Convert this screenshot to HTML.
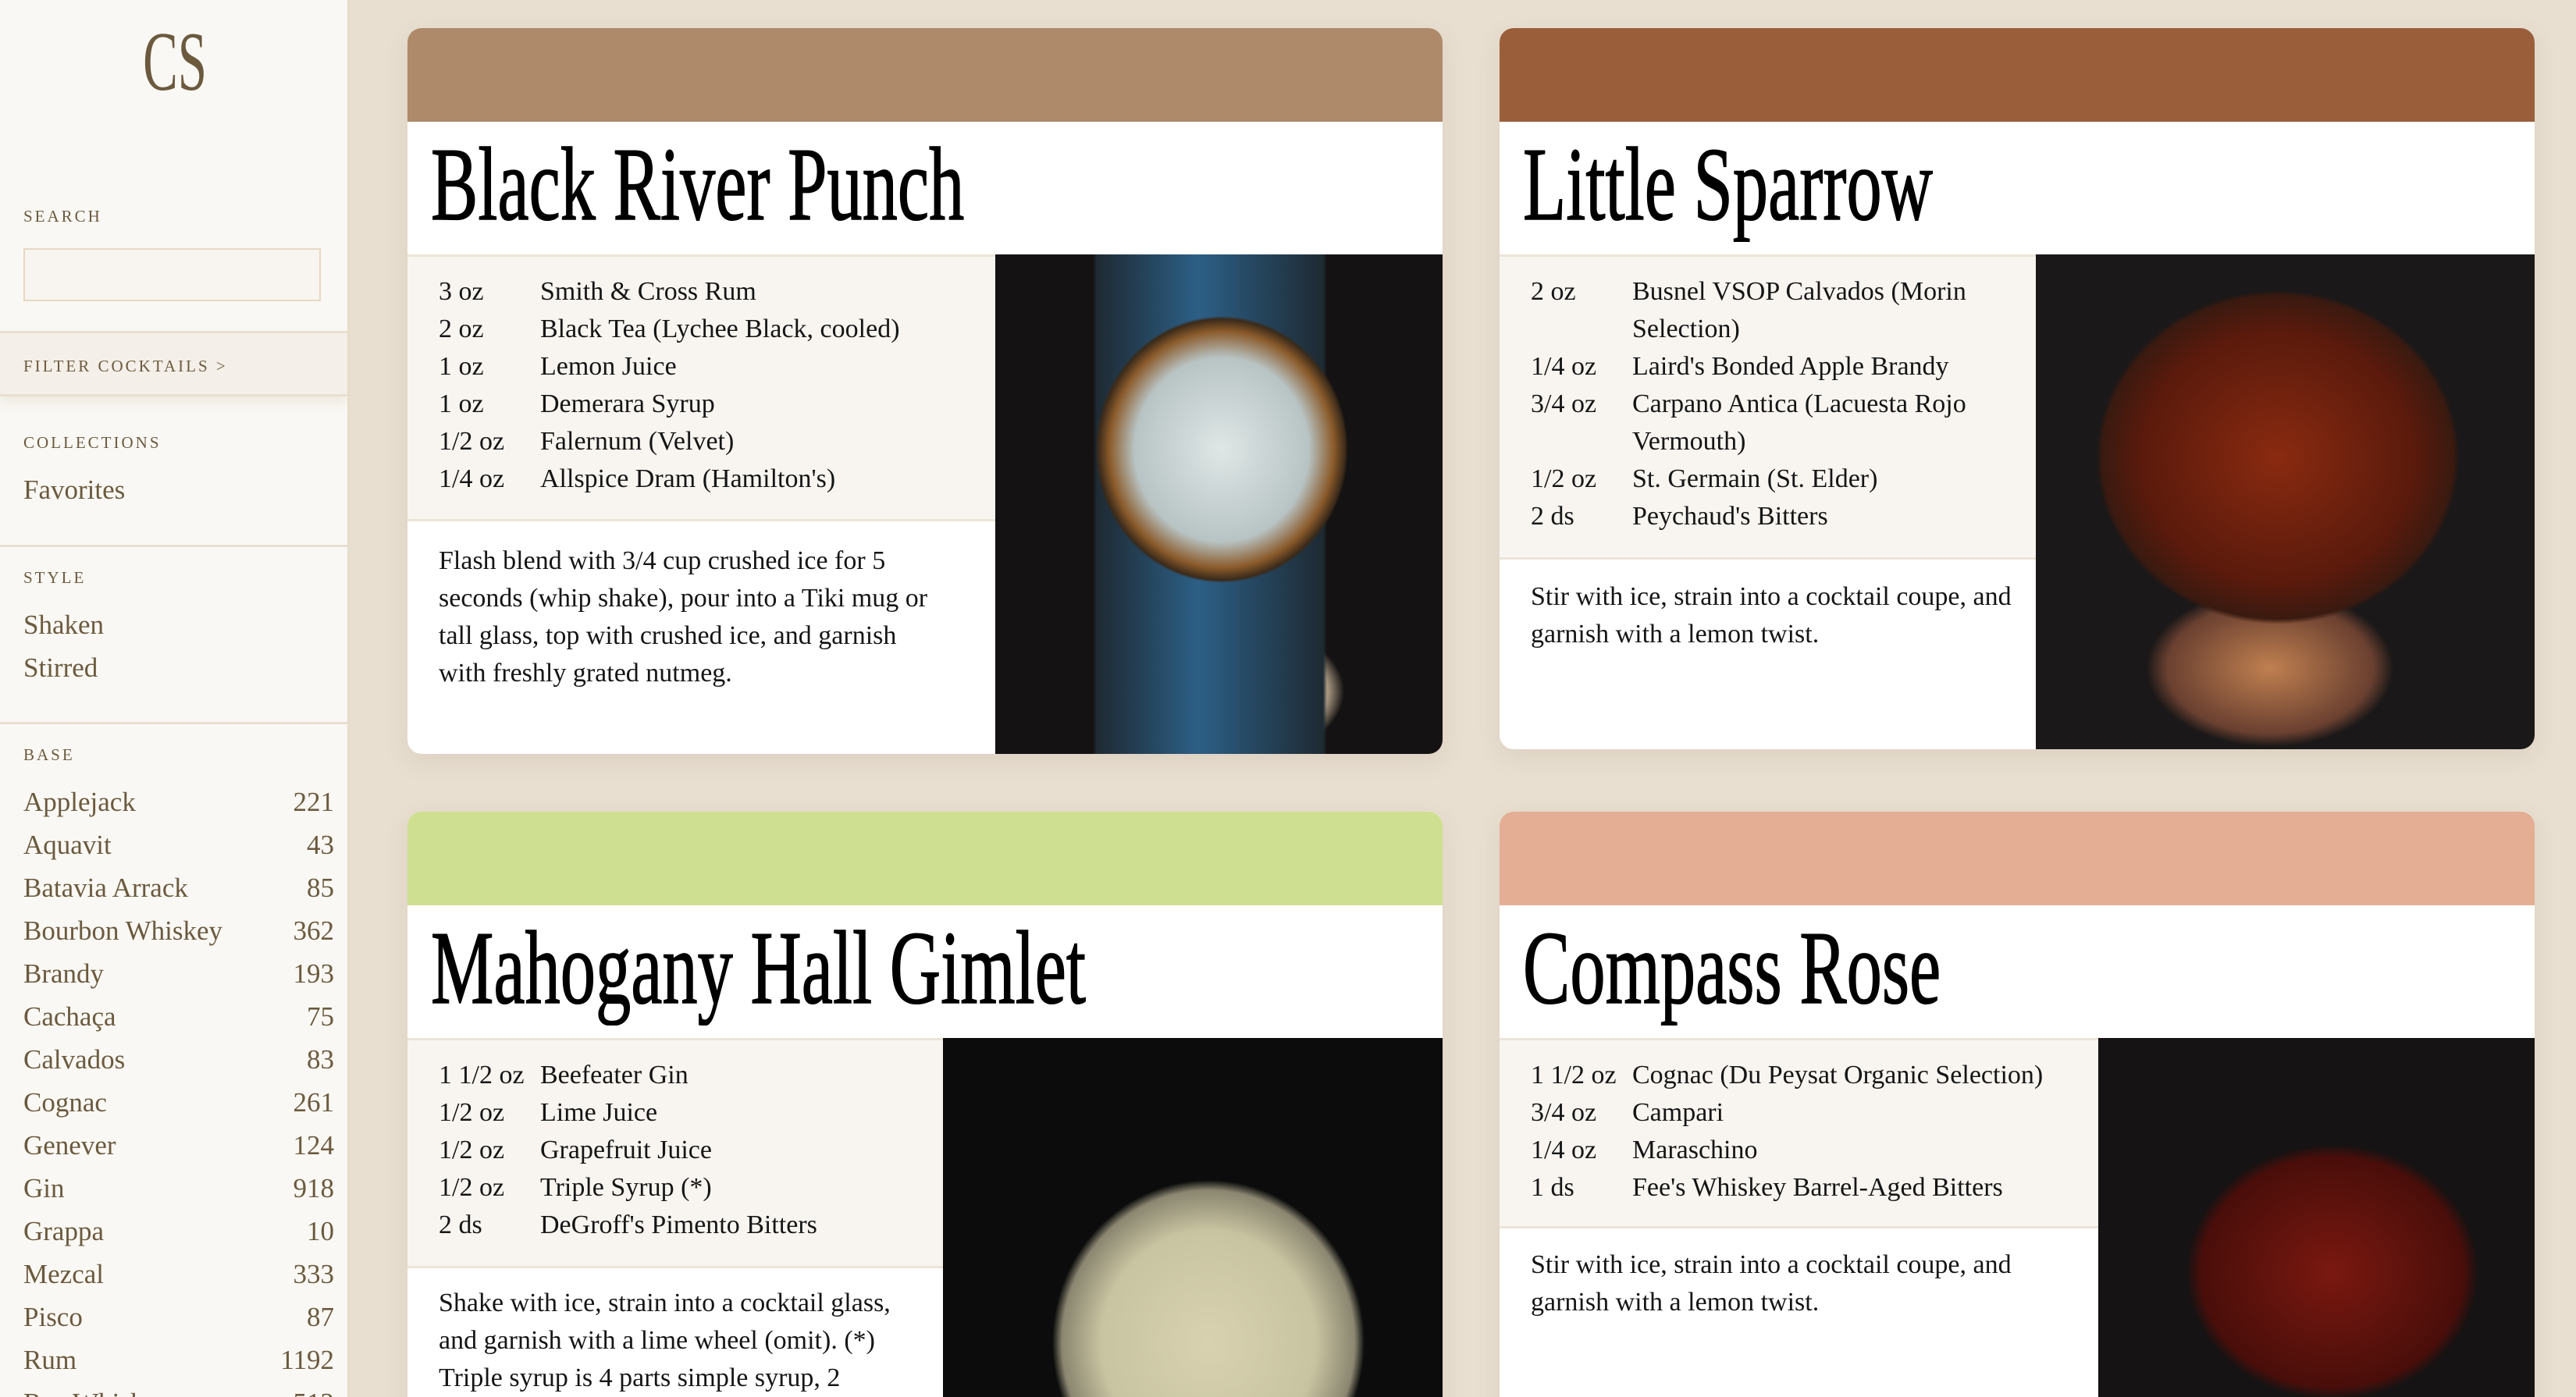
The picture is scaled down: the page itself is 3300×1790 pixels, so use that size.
<!DOCTYPE html>
<html><head><meta charset="utf-8"><style>
*{margin:0;padding:0;box-sizing:border-box}
html,body{width:3300px;height:1790px;overflow:hidden}
body{background:#e8dfd1;font-family:"Liberation Serif",serif;position:relative}
.side{position:absolute;left:0;top:0;width:448px;height:1790px;overflow:hidden;background:#faf8f4;border-right:3px solid #e6dccb;color:#6b5a3e}
.logo{position:absolute;left:0;width:448px;top:18px;text-align:center;font-size:108px;color:#6b5a3e}
.logo span{display:inline-block;transform:scaleX(.62)}
.lbl{position:absolute;left:30px;font-size:21px;letter-spacing:3px;color:#6b5a3e}
.inp{position:absolute;left:30px;top:318px;width:381px;height:68px;border:2px solid #e6d8c2;background:#f8f5f0}
.hr{position:absolute;left:0;width:445px;height:3px;background:#e8dfd0}
.filter{position:absolute;left:0;top:424px;width:445px;height:84px;background:#f4efe8;border-top:3px solid #e8dfd0;border-bottom:3px solid #e8dfd0;box-shadow:0 8px 14px rgba(150,120,80,.12)}
.it{position:absolute;left:30px;font-size:35px;color:#6b5a3e;width:398px}
.it b{position:absolute;right:0;font-weight:normal}
.card{position:absolute;background:#fff;border-radius:18px;overflow:hidden;box-shadow:0 10px 30px rgba(140,110,70,.12)}
.band{position:absolute;left:0;top:0;width:100%;height:120px}
.title{position:absolute;left:30px;top:133px;font-size:134px;line-height:1;white-space:nowrap;color:#000;-webkit-text-stroke:1.5px #000}
.title span{display:inline-block;transform:scaleX(.675);transform-origin:left}
.ing{position:absolute;left:0;top:290px;background:#f8f5f0;border-top:3px solid #ece4d8;border-bottom:3px solid #ece4d8;padding:21px 0 0 40px;font-size:34px;line-height:48px;color:#151515}
.row{position:relative;padding-left:130px}
.row i{position:absolute;left:0;font-style:normal}
.ins{position:absolute;left:40px;font-size:34px;line-height:48px;color:#151515}
.img{position:absolute;top:290px}
</style></head><body>
<div class="side">
<div class="logo"><span>CS</span></div>
<div class="lbl" style="top:265px">SEARCH</div>
<div class="inp"></div>
<div class="filter"><div class="lbl" style="top:30px">FILTER COCKTAILS &gt;</div></div>
<div class="lbl" style="top:555px">COLLECTIONS</div>
<div class="it" style="top:608px">Favorites</div>
<div class="hr" style="top:698px"></div>
<div class="lbl" style="top:728px">STYLE</div>
<div class="it" style="top:781px">Shaken</div>
<div class="it" style="top:836px">Stirred</div>
<div class="hr" style="top:925px"></div>
<div class="lbl" style="top:955px">BASE</div>
<div class="it" style="top:1008px">Applejack<b>221</b></div>
<div class="it" style="top:1063px">Aquavit<b>43</b></div>
<div class="it" style="top:1118px">Batavia Arrack<b>85</b></div>
<div class="it" style="top:1173px">Bourbon Whiskey<b>362</b></div>
<div class="it" style="top:1228px">Brandy<b>193</b></div>
<div class="it" style="top:1283px">Cachaça<b>75</b></div>
<div class="it" style="top:1338px">Calvados<b>83</b></div>
<div class="it" style="top:1393px">Cognac<b>261</b></div>
<div class="it" style="top:1448px">Genever<b>124</b></div>
<div class="it" style="top:1503px">Gin<b>918</b></div>
<div class="it" style="top:1558px">Grappa<b>10</b></div>
<div class="it" style="top:1613px">Mezcal<b>333</b></div>
<div class="it" style="top:1668px">Pisco<b>87</b></div>
<div class="it" style="top:1723px">Rum<b>1192</b></div>
<div class="it" style="top:1778px">Rye Whiskey<b>512</b></div>
</div>

<div class="card" style="left:522px;top:36px;width:1326px;height:930px">
<div class="band" style="background:#ae8a6b"></div>
<div class="title"><span>Black River Punch</span></div>
<div class="ing" style="width:753px;height:342px">
<div class="row"><i>3 oz</i>Smith &amp; Cross Rum</div>
<div class="row"><i>2 oz</i>Black Tea (Lychee Black, cooled)</div>
<div class="row"><i>1 oz</i>Lemon Juice</div>
<div class="row"><i>1 oz</i>Demerara Syrup</div>
<div class="row"><i>1/2 oz</i>Falernum (Velvet)</div>
<div class="row"><i>1/4 oz</i>Allspice Dram (Hamilton's)</div>
</div>
<div class="ins" style="top:665px;width:650px;margin-top:-6px">Flash blend with 3/4 cup crushed ice for 5 seconds (whip shake), pour into a Tiki mug or tall glass, top with crushed ice, and garnish with freshly grated nutmeg.</div>
<div class="img" style="left:753px;width:573px;height:640px;background:radial-gradient(ellipse 180px 190px at 290px 250px,#dfe6e6 0,#b8c4c4 62%,#8a5a2a 80%,#3a2a1a 88%,transparent 90%),linear-gradient(90deg,transparent 125px,#1e2a33 130px,#2c5f86 260px,#1e2a33 420px,transparent 425px),radial-gradient(ellipse 210px 130px at 300px 560px,#d8cfc0 0,#a89880 60%,transparent 70%),#141212"></div>
</div>

<div class="card" style="left:1921px;top:36px;width:1326px;height:924px">
<div class="band" style="background:#9a5e3b"></div>
<div class="title"><span>Little Sparrow</span></div>
<div class="ing" style="width:687px;height:391px">
<div class="row"><i>2 oz</i>Busnel VSOP Calvados (Morin<br>Selection)</div>
<div class="row"><i>1/4 oz</i>Laird's Bonded Apple Brandy</div>
<div class="row"><i>3/4 oz</i>Carpano Antica (Lacuesta Rojo<br>Vermouth)</div>
<div class="row"><i>1/2 oz</i>St. Germain (St. Elder)</div>
<div class="row"><i>2 ds</i>Peychaud's Bitters</div>
</div>
<div class="ins" style="top:705px;width:620px">Stir with ice, strain into a cocktail coupe, and garnish with a lemon twist.</div>
<div class="img" style="left:687px;width:639px;height:634px;background:radial-gradient(ellipse 250px 230px at 310px 260px,#8a2a10 0,#5a1a0c 70%,#3a1a10 90%,transparent 93%),radial-gradient(ellipse 220px 140px at 300px 530px,#c08050 0,#6a4030 60%,transparent 72%),#1a1818"></div>
</div>

<div class="card" style="left:522px;top:1040px;width:1326px;height:780px">
<div class="band" style="background:#cfdf91"></div>
<div class="title"><span>Mahogany Hall Gimlet</span></div>
<div class="ing" style="width:686px;height:295px">
<div class="row"><i>1 1/2 oz</i>Beefeater Gin</div>
<div class="row"><i>1/2 oz</i>Lime Juice</div>
<div class="row"><i>1/2 oz</i>Grapefruit Juice</div>
<div class="row"><i>1/2 oz</i>Triple Syrup (*)</div>
<div class="row"><i>2 ds</i>DeGroff's Pimento Bitters</div>
</div>
<div class="ins" style="top:606px;width:615px">Shake with ice, strain into a cocktail glass, and garnish with a lime wheel (omit). (*) Triple syrup is 4 parts simple syrup, 2</div>
<div class="img" style="left:686px;width:640px;height:500px;background:radial-gradient(ellipse 250px 260px at 340px 390px,#d8d2b0 0,#c8c3a0 55%,#8a8670 75%,transparent 80%),#0c0c0c"></div>
</div>

<div class="card" style="left:1921px;top:1040px;width:1326px;height:780px">
<div class="band" style="background:#e3ae93"></div>
<div class="title"><span>Compass Rose</span></div>
<div class="ing" style="width:767px;height:244px">
<div class="row"><i>1 1/2 oz</i>Cognac (Du Peysat Organic Selection)</div>
<div class="row"><i>3/4 oz</i>Campari</div>
<div class="row"><i>1/4 oz</i>Maraschino</div>
<div class="row"><i>1 ds</i>Fee's Whiskey Barrel-Aged Bitters</div>
</div>
<div class="ins" style="top:557px;width:680px">Stir with ice, strain into a cocktail coupe, and garnish with a lemon twist.</div>
<div class="img" style="left:767px;width:559px;height:500px;background:radial-gradient(ellipse 240px 210px at 300px 300px,#7a1810 0,#4a0e0a 70%,transparent 78%),#151313"></div>
</div>
</body></html>
